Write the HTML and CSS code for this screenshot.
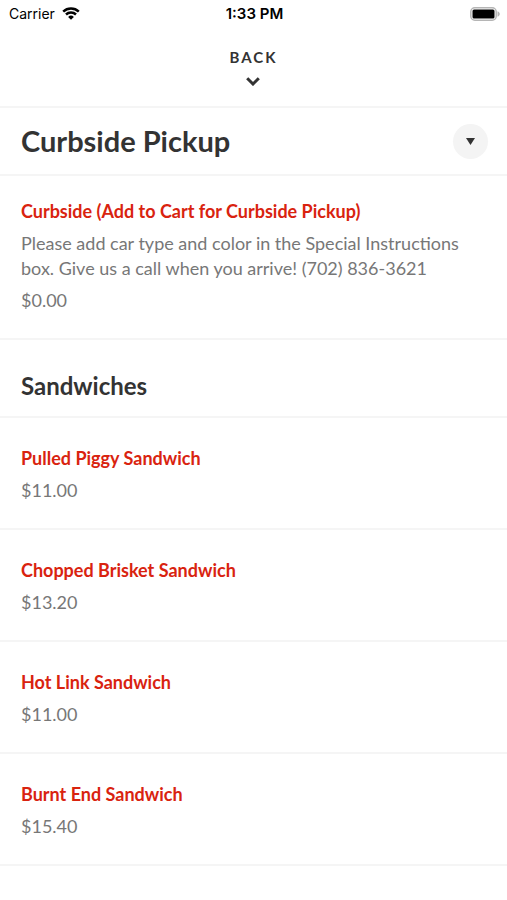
FILE: index.html
```html
<!DOCTYPE html>
<html lang="en">
<head>
    <meta charset="UTF-8">
    <meta name="viewport" content="width=device-width, initial-scale=1">
    <title>Menu</title>
    <link rel="stylesheet" href="styles.css">
</head>
<body>
    <div class="status-bar">
        <div class="carrier">
            <span>Carrier</span>
            <svg class="wifi" viewBox="0 0 18 13" aria-hidden="true">
                <path d="M1.2 4.6a11.3 11.3 0 0 1 15.6 0" />
                <path d="M4 7.5a7.2 7.2 0 0 1 10 0" />
                <path class="dot" d="M9 12.8 6.1 9.9a4.1 4.1 0 0 1 5.8 0z" />
            </svg>
        </div>
        <span class="time">1:33 PM</span>
        <svg class="battery" viewBox="0 0 30 14" aria-hidden="true">
            <rect class="battery-case" x="0.8" y="0.8" width="25.4" height="12.4" rx="4" />
            <rect x="2.5" y="2.5" width="22" height="9" rx="1.5" />
            <path class="battery-tip" d="M27.5 4.2c3 1.2 3 4.4 0 5.6z" />
        </svg>
    </div>

    <header>
        <button type="button" class="back">
            <span>BACK</span>
            <svg class="chevron" viewBox="0 0 14 9" aria-hidden="true">
                <path d="M1.2 1.2 7 7l5.8-5.8" />
            </svg>
        </button>
    </header>

    <main>
        <div class="category">
            <h1>Curbside Pickup</h1>
            <button type="button" class="toggle" aria-label="Choose a category">
                <svg viewBox="0 0 9 7" aria-hidden="true">
                    <path d="M0 0h9L4.5 7z" />
                </svg>
            </button>
        </div>
        <a href="#" class="item featured">
            <h3>Curbside (Add to Cart for Curbside Pickup)</h3>
            <p class="description">Please add car type and color in the Special Instructions box. Give us a call when you arrive! (702) 836-3621</p>
            <p class="price">$0.00</p>
        </a>

        <h2>Sandwiches</h2>
        <a href="#" class="item">
            <h3>Pulled Piggy Sandwich</h3>
            <p class="price">$11.00</p>
        </a>
        <a href="#" class="item">
            <h3>Chopped Brisket Sandwich</h3>
            <p class="price">$13.20</p>
        </a>
        <a href="#" class="item">
            <h3>Hot Link Sandwich</h3>
            <p class="price">$11.00</p>
        </a>
        <a href="#" class="item">
            <h3>Burnt End Sandwich</h3>
            <p class="price">$15.40</p>
        </a>
    </main>
</body>
</html>
```
FILE: styles.css
```css
/* General Styles */
* {
    box-sizing: border-box;
}

body {
    font-family: Lato, sans-serif;
    margin: 0;
    background-color: #fff;
    color: #333;
}

h1, h2, h3, p {
    margin: 0;
}

button {
    border: 0;
    padding: 0;
    color: inherit;
    font-family: inherit;
    cursor: pointer;
}

/* Status bar */
.status-bar {
    display: grid;
    grid-template-columns: 1fr auto 1fr;
    align-items: center;
    height: 27px;
    padding: 0 7px 0 9px;
    color: #000;
    font-family: Inter, sans-serif;
    font-size: 14px;
}

.carrier {
    display: flex;
    align-items: center;
    gap: 7px;
}

.wifi {
    width: 18px;
    height: 13px;
    fill: none;
    stroke: #000;
    stroke-width: 2.5;
}

.wifi .dot {
    fill: #000;
    stroke: none;
}

.time {
    font-size: 15px;
    font-weight: 600;
}

.battery {
    width: 30px;
    height: 14px;
    justify-self: end;
}

.battery-case {
    fill: none;
    stroke: #b5b5b5;
    stroke-width: 1.5;
}

.battery-tip {
    fill: #b5b5b5;
}

/* Back header */
header {
    display: flex;
    justify-content: center;
    height: 81px;
    padding-top: 20px;
    border-bottom: 2px solid #f5f5f5;
}

.back {
    display: flex;
    flex-direction: column;
    align-items: center;
    align-self: flex-start;
    gap: 10px;
    background: none;
    font-size: 15px;
    font-weight: bold;
    line-height: 20px;
    letter-spacing: 2px;
}

.chevron {
    width: 14px;
    height: 9px;
    fill: none;
    stroke: #333;
    stroke-width: 3;
}

/* Menu */
.category {
    display: flex;
    align-items: center;
    justify-content: space-between;
    height: 68px;
    padding: 0 19px 0 21px;
    border-bottom: 2px solid #f5f5f5;
}

h1 {
    font-size: 29px;
    line-height: 36px;
}

.toggle {
    display: flex;
    align-items: center;
    justify-content: center;
    width: 35px;
    height: 35px;
    border-radius: 50%;
    background-color: #f4f4f4;
}

.toggle svg {
    width: 9px;
    height: 7px;
    fill: #333;
}

h2 {
    padding: 30px 21px 14px;
    border-bottom: 2px solid #f5f5f5;
    font-size: 24px;
    line-height: 32px;
}

.item {
    display: block;
    padding: 28px 21px 25px;
    border-bottom: 2px solid #f5f5f5;
    color: #777;
    font-size: 18px;
    line-height: 25px;
    text-decoration: none;
}

.item.featured {
    padding-top: 23px;
}

.item h3 {
    color: #d9230f;
    font-size: 18px;
}

.description,
.price {
    margin-top: 7px;
}
```
